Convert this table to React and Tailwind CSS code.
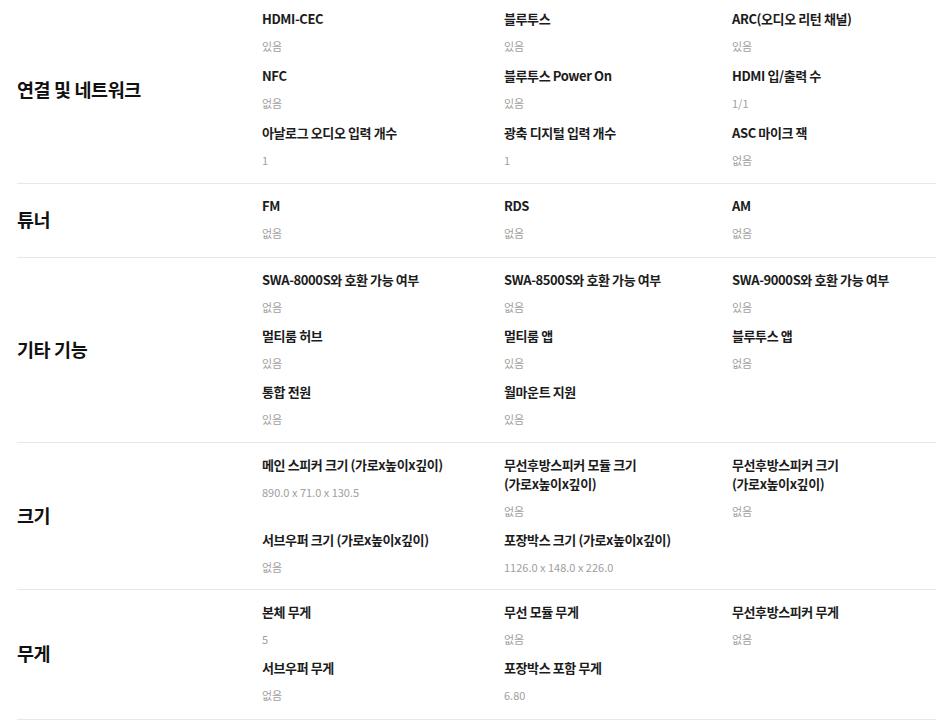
const sections = [
  {
    title: '연결 및 네트워크',
    pad: 'pt-[9px] pb-[13px]',
    gap: 'gap-y-[10px]',
    items: [
      ['HDMI-CEC', '있음'],
      ['블루투스', '있음'],
      ['ARC(오디오 리턴 채널)', '있음'],
      ['NFC', '없음'],
      ['블루투스 Power On', '있음'],
      ['HDMI 입/출력 수', '1/1'],
      ['아날로그 오디오 입력 개수', '1'],
      ['광축 디지털 입력 개수', '1'],
      ['ASC 마이크 잭', '없음'],
    ],
  },
  {
    title: '튜너',
    pad: 'pt-[12px] pb-[14px]',
    gap: 'gap-y-[9px]',
    items: [
      ['FM', '없음'],
      ['RDS', '없음'],
      ['AM', '없음'],
    ],
  },
  {
    title: '기타 기능',
    pad: 'pt-[12px] pb-[13px]',
    gap: 'gap-y-[9px]',
    items: [
      ['SWA-8000S와 호환 가능 여부', '없음'],
      ['SWA-8500S와 호환 가능 여부', '없음'],
      ['SWA-9000S와 호환 가능 여부', '있음'],
      ['멀티룸 허브', '있음'],
      ['멀티룸 앱', '있음'],
      ['블루투스 앱', '없음'],
      ['통합 전원', '있음'],
      ['월마운트 지원', '있음'],
    ],
  },
  {
    title: '크기',
    pad: 'pt-[12px] pb-[12px]',
    gap: 'gap-y-[9px]',
    items: [
      ['메인 스피커 크기 (가로x높이x깊이)', '890.0 x 71.0 x 130.5'],
      [['무선후방스피커 모듈 크기', '(가로x높이x깊이)'], '없음'],
      [['무선후방스피커 크기', '(가로x높이x깊이)'], '없음'],
      ['서브우퍼 크기 (가로x높이x깊이)', '없음'],
      ['포장박스 크기 (가로x높이x깊이)', '1126.0 x 148.0 x 226.0'],
    ],
  },
  {
    title: '무게',
    pad: 'pt-[12px] pb-[14px]',
    gap: 'gap-y-[9px]',
    items: [
      ['본체 무게', '5'],
      ['무선 모듈 무게', '없음'],
      ['무선후방스피커 무게', '없음'],
      ['서브우퍼 무게', '없음'],
      ['포장박스 포함 무게', '6.80'],
    ],
  },
];

function SpecItem({ label, value }) {
  const lines = Array.isArray(label) ? label : [label];
  return (
    <div className="pr-4">
      <p className="text-[13px] leading-[19px] font-bold text-[#1c1c1c] tracking-[-0.4px]">
        {lines.map((l, i) => (
          <span key={i} className="block">{l}</span>
        ))}
      </p>
      <p className="mt-[9px] text-[11px] leading-[19px] text-[#a0a0a0]">{value}</p>
    </div>
  );
}

export default function App() {
  return (
    <div className="w-[936px] min-h-[720px] bg-white pl-[17px] font-['Noto_Sans_CJK_KR','Noto_Sans',sans-serif]">
      {sections.map((s) => (
        <div key={s.title} className={`flex items-center border-b border-[#e8e8e8] ${s.pad}`}>
          <h2 className="w-[245px] shrink-0 text-[18.5px] font-bold text-[#111] tracking-[-0.4px]">{s.title}</h2>
          <div className={`flex-1 grid grid-cols-[242px_228px_1fr] ${s.gap}`}>
            {s.items.map(([label, value]) => (
              <SpecItem key={String(label)} label={label} value={value} />
            ))}
          </div>
        </div>
      ))}
    </div>
  );
}
